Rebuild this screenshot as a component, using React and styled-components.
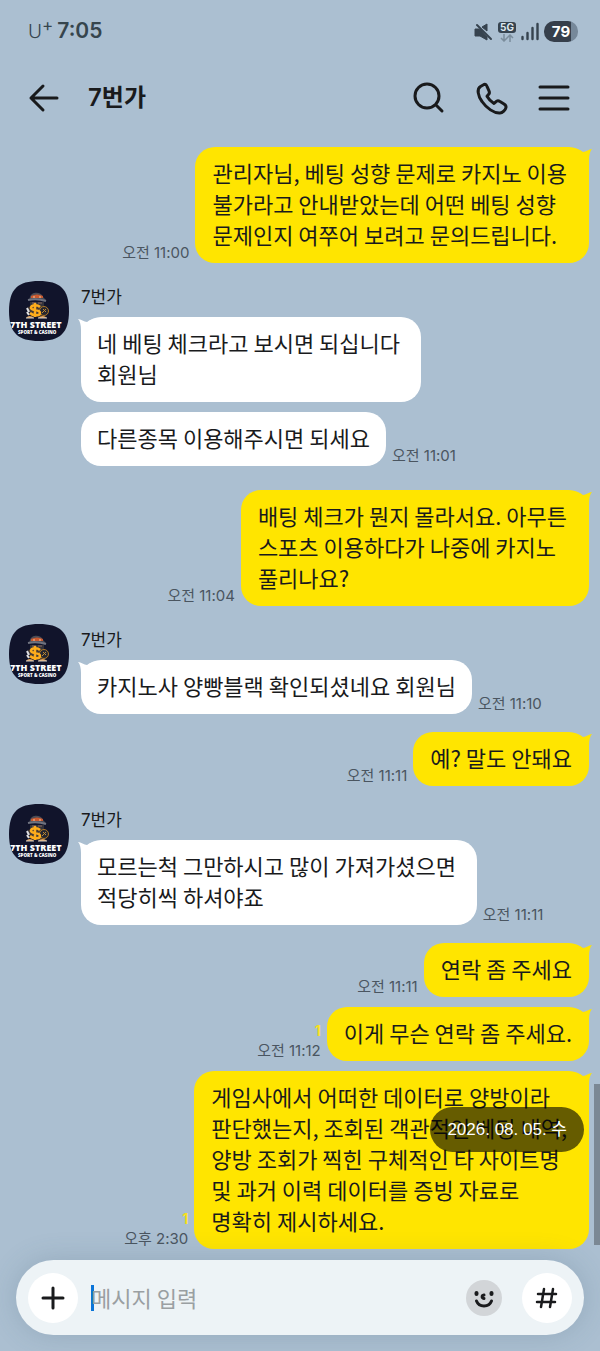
import styled, { createGlobalStyle } from "styled-components";

const GlobalStyle = createGlobalStyle`
  * {
    box-sizing: border-box;
  }
  body {
    margin: 0;
    background: #abbfd1;
    color: #191a1c;
    font-family: "Noto Sans CJK KR", sans-serif;
  }
  button, input {
    font: inherit;
    color: inherit;
  }
`;

const Page = styled.div`
  min-height: 100vh;
  display: flex;
  flex-direction: column;
`;

const StatusBar = styled.div`
  display: flex;
  align-items: center;
  justify-content: space-between;
  padding: 16px 22px 26px 28px;
  line-height: 30px;
  color: #36454d;
  font-family: Inter, sans-serif;
`;

const Clock = styled.div`
  font-size: 21px;
  font-weight: 600;
`;

const Carrier = styled.span`
  margin-right: 4px;
  font-size: 19px;
  font-weight: 300;
  sup {
    font-size: 17px;
    font-weight: 400;
    line-height: 0;
  }
`;

const StatusIcons = styled.div`
  display: flex;
  align-items: center;
  gap: 5px;
`;

const Network = styled.div`
  display: flex;
  flex-direction: column;
  align-items: center;
  gap: 1px;
  span {
    padding: 0 2px;
    border-radius: 3px;
    background: #36434f;
    color: #dfe8ef;
    font-size: 10px;
    font-weight: 700;
    line-height: 11px;
  }
`;

const Battery = styled.div`
  width: 34px;
  border-radius: 10px;
  background: linear-gradient(90deg, #363f4b 79%, #76889a 79%);
  color: #fff;
  font-size: 15px;
  font-weight: 700;
  line-height: 21px;
  text-align: center;
`;

const TopBar = styled.header`
  display: flex;
  align-items: center;
  padding: 0 21px 0 19px;
  h1 {
    flex: 1;
    margin: 0 0 0 19px;
    font-family: Inter, "Noto Sans CJK KR", sans-serif;
    font-size: 24px;
    font-weight: 600;
    line-height: 50px;
  }
`;

const IconButton = styled.button`
  width: 50px;
  height: 50px;
  display: flex;
  align-items: center;
  justify-content: center;
  padding: 0;
  border: 0;
  border-radius: 50%;
  background: ${({ $fill }) => $fill || "transparent"};
  cursor: pointer;
`;

const Actions = styled.div`
  display: flex;
  gap: 13px;
`;

const Chat = styled.main`
  position: relative;
  flex: 1;
  display: flex;
  flex-direction: column;
  gap: 18px;
  padding: 24px 11px 10px 9px;
`;

const Group = styled.section`
  display: flex;
  flex-direction: column;
  gap: 10px;
  padding-bottom: ${({ $spaced }) => ($spaced ? "6px" : "0")};
`;

const Sender = styled.section`
  display: flex;
  align-items: flex-start;
  gap: 12px;
  svg {
    flex-shrink: 0;
  }
  h2 {
    margin: 0 0 4px;
    font-family: Inter, "Noto Sans CJK KR", sans-serif;
    font-size: 17px;
    font-weight: 400;
    line-height: 32px;
  }
`;

const Row = styled.div`
  display: flex;
  flex-direction: ${({ $mine }) => ($mine ? "row-reverse" : "row")};
  align-items: flex-end;
  gap: 6px;
`;

const Bubble = styled.p`
  position: relative;
  margin: 0;
  padding: ${({ $mine }) => ($mine ? "10px 17px 13px" : "10px 16px 13px")};
  border-radius: 20px;
  background: ${({ $mine }) => ($mine ? "#ffe500" : "#ffffff")};
  font-size: 22px;
  line-height: 31px;
  white-space: pre-wrap;
`;

const TailShape = styled.svg`
  position: absolute;
  top: 1px;
  ${({ $mine }) => ($mine ? "right: -3px;" : "left: -3px; transform: scaleX(-1);")}
  fill: ${({ $mine }) => ($mine ? "#ffe500" : "#ffffff")};
`;

const Meta = styled.div`
  flex-shrink: 0;
  display: flex;
  flex-direction: column;
  align-items: flex-end;
  color: #4a5560;
  font-family: Inter, "Noto Sans CJK KR", sans-serif;
  font-size: 15px;
  line-height: 20px;
  b {
    color: #f8e01c;
    font-size: 14px;
  }
`;

const DateBadge = styled.div`
  position: absolute;
  right: 16px;
  bottom: 108px;
  padding: 0 17px;
  border-radius: 23px;
  background: rgba(0, 0, 0, 0.6);
  color: #fff;
  font-family: "Liberation Sans", "Noto Sans CJK KR", sans-serif;
  font-size: 17px;
  line-height: 45px;
`;

const ScrollThumb = styled.div`
  position: absolute;
  right: 0;
  bottom: 15px;
  width: 6px;
  height: 161px;
  background: #7b8894;
`;

const Footer = styled.footer`
  position: sticky;
  bottom: 0;
  padding: 0 16px 16px;
`;

const Composer = styled.form`
  display: flex;
  align-items: center;
  padding: 12px;
  border-radius: 38px;
  background: #edf3f6;
  box-shadow: 0 0 28px rgba(70, 95, 115, 0.22);
`;

const Caret = styled.span`
  width: 3px;
  height: 26px;
  margin-left: 13px;
  background: #0a74d8;
`;

const MessageInput = styled.input`
  flex: 1;
  min-width: 0;
  margin-left: -3px;
  padding: 0;
  border: 0;
  outline: 0;
  background: transparent;
  font-size: 22px;
  line-height: 51px;
  height: 51px;
  &::placeholder {
    color: #9a9fa2;
    opacity: 1;
  }
`;

const EmojiButton = styled(IconButton)`
  width: 36px;
  height: 36px;
  margin-right: 20px;
`;

const Icon = ({ size = 36, width = 3, children }) => (
  <svg
    width={size}
    height={size}
    viewBox={`0 0 ${size} ${size}`}
    fill="none"
    stroke="#191a1c"
    strokeWidth={width}
    strokeLinecap="round"
    strokeLinejoin="round"
    aria-hidden="true"
  >
    {children}
  </svg>
);

const Avatar = () => (
  <svg width="60" height="60" viewBox="0 0 60 60" role="img" aria-label="7th Street">
    <clipPath id="squircle">
      <path d="M30 0C51 0 60 8 60 30S51 60 30 60 0 52 0 30 9 0 30 0Z" />
    </clipPath>
    <g clipPath="url(#squircle)">
      <rect width="60" height="60" fill="#11142b" />
      <path d="M21 16C22 11 32 10 34 16L37 19H20Z" fill="#4a4b55" />
      <path d="M22 15Q28 12 34 15V17H22Z" fill="#c9582f" />
      <path d="M25 15V17M31 15V17" stroke="#e9c9a4" strokeWidth="1" />
      <path d="M19 19Q28 17 37 20" stroke="#6f7380" strokeWidth="2" fill="none" />
      <path d="M21 21H35V25Q28 28 21 25Z" fill="#34343b" />
      <path d="M23 22H27M29 22H33" stroke="#8d6a66" strokeWidth="1" />
      <path d="M19 26Q27 22 35 26L33 36H22Z" fill="#463b35" />
      <circle cx="35" cy="30" r="4.5" fill="#252630" stroke="#ad7827" strokeWidth="1" />
      <path d="M33 32L37 28M34 28L37 31" stroke="#c18a31" strokeWidth="1" />
      <path
        d="M31 26C28 23 22 24 22 27C22 30 31 28 31 32C31 35 24 35 21 32M26 22V36"
        stroke="#ffad1c"
        strokeWidth="2.5"
        fill="none"
      />
      <path d="M18 27L20 31M18 31L20 34" stroke="#e1e1e3" strokeWidth="2" />
      <path d="M17 37Q20 33 25 37ZM29 37Q34 33 38 37Z" fill="#e8a457" />
      <path d="M17 37H25M29 37H38" stroke="#d3cfca" strokeWidth="1" />
      <g fill="#fff" fontFamily="Open Sans, sans-serif" fontWeight="800">
        <text x="1" y="47" fontSize="9">7TH STREET</text>
        <text x="9" y="53" fontSize="4.5">SPORT &amp; CASINO</text>
      </g>
    </g>
  </svg>
);

const Message = ({ mine, tail, text, time, unread }) => (
  <Row $mine={mine}>
    <Bubble $mine={mine}>
      {tail && (
        <TailShape $mine={mine} width="24" height="20" viewBox="0 0 24 20" aria-hidden="true">
          <path d="M0 0C7 0 12 2 15 4C18 4 21 1 24 1C22 3 21 7 21 12V20H10Z" />
        </TailShape>
      )}
      {text}
    </Bubble>
    {time && (
      <Meta>
        {unread && <b>{unread}</b>}
        <time>{time}</time>
      </Meta>
    )}
  </Row>
);

const groups = [
  {
    mine: true,
    messages: [
      {
        text: "관리자님, 베팅 성향 문제로 카지노 이용 \n불가라고 안내받았는데 어떤 베팅 성향 \n문제인지 여쭈어 보려고 문의드립니다.",
        time: "오전 11:00",
        tail: true,
      },
    ],
  },
  {
    spaced: true,
    messages: [
      { text: "네 베팅 체크라고 보시면 되십니다 \n회원님", tail: true },
      { text: "다른종목 이용해주시면 되세요", time: "오전 11:01" },
    ],
  },
  {
    mine: true,
    messages: [
      {
        text: "배팅 체크가 뭔지 몰라서요. 아무튼 \n스포츠 이용하다가 나중에 카지노 \n풀리나요?",
        time: "오전 11:04",
        tail: true,
      },
    ],
  },
  {
    messages: [{ text: "카지노사 양빵블랙 확인되셨네요 회원님", time: "오전 11:10", tail: true }],
  },
  {
    mine: true,
    messages: [{ text: "예? 말도 안돼요", time: "오전 11:11", tail: true }],
  },
  {
    messages: [
      {
        text: "모르는척 그만하시고 많이 가져가셨으면 \n적당히씩 하셔야죠",
        time: "오전 11:11",
        tail: true,
      },
    ],
  },
  {
    mine: true,
    messages: [
      { text: "연락 좀 주세요", time: "오전 11:11", tail: true },
      { text: "이게 무슨 연락 좀 주세요.", time: "오전 11:12", unread: 1, tail: true },
      {
        text: "게임사에서 어떠한 데이터로 양방이라 \n판단했는지, 조회된 객관적인 베팅 내역, \n양방 조회가 찍힌 구체적인 타 사이트명 \n및 과거 이력 데이터를 증빙 자료로 \n명확히 제시하세요.",
        time: "오후 2:30",
        unread: 1,
        tail: true,
      },
    ],
  },
];

export default function App() {
  return (
    <Page>
      <GlobalStyle />
      <StatusBar>
        <Clock>
          <Carrier>
            U<sup>+</sup>
          </Carrier>
          7:05
        </Clock>
        <StatusIcons>
          <svg width="19" height="20" viewBox="0 0 19 20" aria-hidden="true">
            <path
              d="M1 7H5L7 8L13 15V18L6 14H1ZM8 5L13 2V9Z"
              fill="#36434f"
              stroke="#36434f"
              strokeLinejoin="round"
            />
            <path d="M3 3L17 17" stroke="#36434f" strokeWidth="2" strokeLinecap="round" />
          </svg>
          <Network>
            <span>5G</span>
            <svg width="14" height="8" viewBox="0 0 14 8" fill="none" stroke="#7b8d9c" strokeWidth="1.5" aria-hidden="true">
              <path d="M4 0V7M1 4L4 7L7 4M10 8V1M7 4L10 1L13 4" />
            </svg>
          </Network>
          <svg width="18" height="19" viewBox="0 0 18 19" stroke="#36434f" strokeWidth="2.4" strokeLinecap="round" aria-hidden="true">
            <path d="M1.5 15V17M6.5 11V17M11.5 6V17M16.5 2V17" />
          </svg>
          <Battery>79</Battery>
        </StatusIcons>
      </StatusBar>

      <TopBar>
        <IconButton type="button" aria-label="뒤로">
          <Icon>
            <path d="M31 18H5M17 6L5 18L17 30" />
          </Icon>
        </IconButton>
        <h1>7번가</h1>
        <Actions>
          <IconButton type="button" aria-label="검색">
            <Icon>
              <circle cx="17" cy="16" r="12" />
              <path d="M26 25L32 31" />
            </Icon>
          </IconButton>
          <IconButton type="button" aria-label="전화">
            <Icon>
              <path d="M11 4.5L7.5 6.5C3.5 9 5 16 9 21.5C13.5 28 21 33.5 27 33C29.5 33 32.5 30 33 27.5C33.3 26 32.5 25 31 24L27 21.5C25.5 20.5 24 20.5 22.8 21.8L21 23.5C18.5 22 15.5 19 14 16.3L15.5 14.5C16.7 13.3 16.7 12.3 16 10.8L14 6.3C13.3 4.6 12.3 4 11 4.5Z" />
            </Icon>
          </IconButton>
          <IconButton type="button" aria-label="메뉴">
            <Icon>
              <path d="M4 7H32M4 18H32M4 29H32" />
            </Icon>
          </IconButton>
        </Actions>
      </TopBar>

      <Chat>
        {groups.map(({ mine, spaced, messages }, index) => {
          const list = (
            <Group $spaced={spaced}>
              {messages.map((message) => (
                <Message key={message.text} mine={mine} {...message} />
              ))}
            </Group>
          );
          if (mine) return <div key={index}>{list}</div>;
          return (
            <Sender key={index}>
              <Avatar />
              <div>
                <h2>7번가</h2>
                {list}
              </div>
            </Sender>
          );
        })}
        <DateBadge>2026. 08. 05. 수</DateBadge>
        <ScrollThumb />
      </Chat>

      <Footer>
        <Composer>
          <IconButton type="button" $fill="#fff" aria-label="추가">
            <Icon size={24}>
              <path d="M12 2V22M2 12H22" />
            </Icon>
          </IconButton>
          <Caret />
          <MessageInput type="text" placeholder="메시지 입력" aria-label="메시지 입력" />
          <EmojiButton type="button" $fill="#d2d5d8" aria-label="이모티콘">
            <Icon size={36}>
              <path d="M10.5 13V14M25.5 13V14" strokeWidth="4" />
              <path d="M18 15C15.5 15.5 15.5 18 18 18.5" />
              <path d="M10.5 21C13 27.5 23 27.5 25.5 21" />
            </Icon>
          </EmojiButton>
          <IconButton type="button" $fill="#fff" aria-label="샵검색">
            <Icon size={24} width={2.5}>
              <path d="M9 3L6 21M18 3L15 21M3 8H21M2 16H20" />
            </Icon>
          </IconButton>
        </Composer>
      </Footer>
    </Page>
  );
}
